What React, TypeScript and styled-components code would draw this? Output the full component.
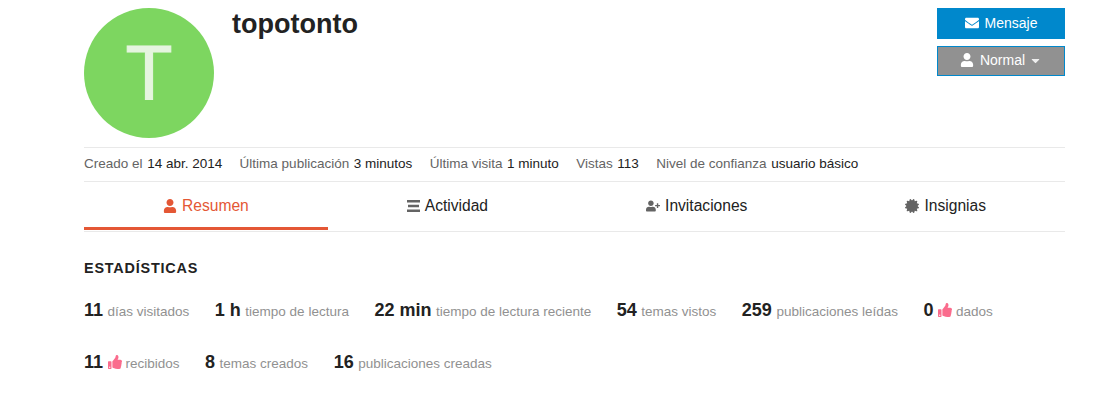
import styled, { createGlobalStyle } from 'styled-components';
import { FaCaretDown, FaCertificate, FaEnvelope, FaThumbsUp, FaUser, FaUserPlus } from 'react-icons/fa';

const GlobalStyle = createGlobalStyle`
	html, body {
		margin: 0;
		background: #fff;
		font-family: 'Liberation Sans', Arial, sans-serif;
		color: #222;
	}
`;

const Page = styled.div`
	width: 981px;
	height: 410px;
	margin-left: 84px;
	overflow: hidden;
`;

const Header = styled.header`
	display: flex;
	height: 139px;
	padding-top: 8px;
	box-sizing: border-box;
`;

const Avatar = styled.div`
	width: 130px;
	height: 130px;
	border-radius: 50%;
	background: #7dd660;
	color: #e5f5df;
	font-size: 77px;
	line-height: 130px;
	text-align: center;
	-webkit-text-stroke: 1px #e5f5df;
`;

const Name = styled.h1`
	flex: 1;
	margin: 0 0 0 18px;
	font-size: 27px;
	line-height: 32px;
	font-weight: 700;
	color: #222;
`;

const Actions = styled.div`
	display: flex;
	flex-direction: column;
	gap: 7px;
	width: 128px;
`;

const ActionButton = styled.button<{ $muted?: boolean }>`
	display: flex;
	align-items: center;
	justify-content: center;
	gap: 6px;
	height: ${(p) => (p.$muted ? '30px' : '31px')};
	padding: 0 0 2px;
	border: ${(p) => (p.$muted ? '1px solid #0088cc' : 'none')};
	background: ${(p) => (p.$muted ? '#919191' : '#0088cc')};
	color: #fff;
	font-family: inherit;
	font-size: 14px;
	svg {
		font-size: 14px;
	}
`;

const Caret = styled(FaCaretDown)`
	&& {
		font-size: 13px;
		margin-left: -2px;
		opacity: 0.85;
	}
`;

const MetaRow = styled.div`
	display: flex;
	gap: 17.4px;
	align-items: center;
	margin-top: 8px;
	padding-bottom: 2px;
	box-sizing: border-box;
	height: 35px;
	border-top: 1px solid #e9e9e9;
	border-bottom: 1px solid #e9e9e9;
	font-size: 13.5px;
`;

const MetaItem = styled.span`
	color: #646464;
	b {
		font-weight: 400;
		color: #222;
		margin-left: 4.6px;
	}
`;

const Tabs = styled.nav`
	display: flex;
	height: 49px;
	border-bottom: 1px solid #e9e9e9;
`;

const Tab = styled.div<{ $active?: boolean }>`
	flex: 1 1 auto;
	display: flex;
	align-items: center;
	justify-content: center;
	gap: 5px;
	height: 48px;
	box-sizing: border-box;
	padding-top: ${(p) => (p.$active ? '3px' : '0')};
	border-bottom: ${(p) => (p.$active ? '3px solid #e45735' : 'none')};
	color: ${(p) => (p.$active ? '#e45735' : '#222')};
	font-size: 15.6px;
	svg {
		color: ${(p) => (p.$active ? '#e45735' : '#646464')};
		font-size: 14px;
	}
`;

const Section = styled.section`
	padding-top: 28px;
`;

const SectionTitle = styled.h3`
	margin: 0;
	font-size: 14.4px;
	line-height: 17px;
	font-weight: 700;
	letter-spacing: 0.8px;
	text-transform: uppercase;
	color: #222;
`;

const StatList = styled.ul`
	display: flex;
	flex-wrap: wrap;
	gap: 32px 25.5px;
	list-style: none;
	margin: 23px 0 0;
	padding: 0;
`;

const Stat = styled.li`
	display: flex;
	align-items: baseline;
	height: 20px;
	font-size: 13.5px;
	color: #919191;
	white-space: nowrap;
`;

const Num = styled.strong`
	font-size: 18px;
	font-weight: 700;
	color: #222;
	margin-right: 4.5px;
`;

const Like = styled(FaThumbsUp)`
	color: #fa6c8d;
	font-size: 14px;
	margin-right: 4px;
	align-self: center;
`;

const ListIcon = () => (
	<svg width='13' height='12' viewBox='0 0 13 12' fill='currentColor'>
		<rect x='0' y='0' width='13' height='2.5' />
		<rect x='1' y='4.75' width='11' height='2.5' />
		<rect x='0' y='9.5' width='13' height='2.5' />
	</svg>
);

const meta = [
	['Creado el', '14 abr. 2014'],
	['Última publicación', '3 minutos'],
	['Última visita', '1 minuto'],
	['Vistas', '113'],
	['Nivel de confianza', 'usuario básico'],
];

const stats = [
	{ value: '11', label: 'días visitados' },
	{ value: '1 h', label: 'tiempo de lectura' },
	{ value: '22 min', label: 'tiempo de lectura reciente' },
	{ value: '54', label: 'temas vistos' },
	{ value: '259', label: 'publicaciones leídas' },
	{ value: '0', label: 'dados', liked: true },
	{ value: '11', label: 'recibidos', liked: true },
	{ value: '8', label: 'temas creados' },
	{ value: '16', label: 'publicaciones creadas' },
];

const App = () => {
	return (
		<Page>
			<GlobalStyle />
			<Header>
				<Avatar>T</Avatar>
				<Name>topotonto</Name>
				<Actions>
					<ActionButton>
						<FaEnvelope />
						Mensaje
					</ActionButton>
					<ActionButton $muted>
						<FaUser />
						Normal
						<Caret />
					</ActionButton>
				</Actions>
			</Header>
			<MetaRow>
				{meta.map(([label, value]) => (
					<MetaItem key={label}>
						{label}
						<b>{value}</b>
					</MetaItem>
				))}
			</MetaRow>
			<Tabs>
				<Tab $active>
					<FaUser />
					Resumen
				</Tab>
				<Tab>
					<ListIcon />
					Actividad
				</Tab>
				<Tab>
					<FaUserPlus />
					Invitaciones
				</Tab>
				<Tab>
					<FaCertificate />
					Insignias
				</Tab>
			</Tabs>
			<Section>
				<SectionTitle>Estadísticas</SectionTitle>
				<StatList>
					{stats.map((s) => (
						<Stat key={s.label}>
							<Num>{s.value}</Num>
							{s.liked && <Like />}
							{s.label}
						</Stat>
					))}
				</StatList>
			</Section>
		</Page>
	);
};

export default App;
